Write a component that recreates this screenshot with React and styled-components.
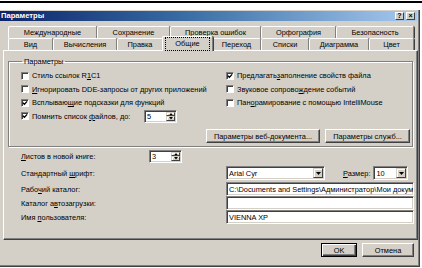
import React from "react";
import styled, { createGlobalStyle } from "styled-components";

const FACE = "#d4d0c8";
const SHADOW = "#808080";
const DARK = "#404040";
const LIGHT = "#ffffff";

const GlobalStyle = createGlobalStyle`
  html, body {
    margin: 0;
    background: #fff;
  }
  body {
    font-family: "Liberation Sans", Arial, sans-serif;
    font-size: 7.4px;
    color: #000;
  }
  u {
    text-decoration-thickness: 1px;
    text-underline-offset: 1px;
  }
`;

const Page = styled.div`
  width: 422px;
  height: 268px;
  overflow: hidden;
  padding-top: 1px;
  box-sizing: border-box;
`;

const TopRule = styled.div`
  height: 2px;
  background: #000;
  margin-bottom: 7px;
`;

const Dialog = styled.div`
  width: 420px;
  height: 257px;
  box-sizing: border-box;
  background: ${FACE};
  border-right: 1px solid ${DARK};
  border-bottom: 1px solid ${DARK};
  box-shadow: inset -1px -1px ${SHADOW};
  padding: 1px 2px 0 0;
  display: flex;
  flex-direction: column;
`;

const TitleBar = styled.div`
  height: 10px;
  display: flex;
  align-items: center;
  background: linear-gradient(to right, #0a246a, #3a6ea5 45%, #a6caf0);
  padding: 0 2px 0 1px;
`;

const Title = styled.div`
  flex: 1;
  color: #fff;
  font-weight: bold;
  font-size: 7.6px;
  line-height: 10px;
`;

const TitleButton = styled.div`
  width: 9px;
  height: 8px;
  box-sizing: border-box;
  background: ${FACE};
  border: 1px solid;
  border-color: ${LIGHT} ${DARK} ${DARK} ${LIGHT};
  font-size: 7px;
  font-weight: bold;
  line-height: 6px;
  text-align: center;
  margin-left: ${(p) => p.$gap || 0}px;
`;

const TabControl = styled.div`
  margin: 5px 0 0 3px;
  width: 415px;
  display: flex;
  flex-direction: column;
`;

const TabRow = styled.div`
  display: flex;
  height: 12px;
  padding-left: 5px;
`;

const Tab = styled.div`
  width: ${(p) => p.$w}px;
  box-sizing: border-box;
  border-top: 1px solid ${LIGHT};
  border-left: 1px solid ${LIGHT};
  border-right: 1px solid ${SHADOW};
  box-shadow: 1px 0 0 ${DARK};
  border-radius: 2px 2px 0 0;
  display: flex;
  align-items: center;
  justify-content: center;
  line-height: 10px;
  white-space: nowrap;
  position: relative;
  ${(p) =>
    p.$active &&
    `
    margin-top: -2px;
    height: 15px;
    z-index: 2;
    background: ${FACE};
    margin-left: -1px;
    margin-right: -1px;
    width: ${p.$w + 2}px;
  `}
`;

const Focus = styled.span`
  outline: 1px dotted #000;
  outline-offset: 1px;
  padding: 0 8px;
`;

const Panel = styled.div`
  height: 190px;
  box-sizing: border-box;
  border-top: 1px solid ${LIGHT};
  border-left: 1px solid ${LIGHT};
  border-right: 1px solid ${DARK};
  border-bottom: 1px solid ${DARK};
  box-shadow: inset -1px -1px ${SHADOW};
  padding: 0 0 0 4px;
  display: flex;
  flex-direction: column;
`;

const Group = styled.fieldset`
  margin: 6px 0 0 0;
  width: 405px;
  box-sizing: border-box;
  border: 1px solid ${SHADOW};
  box-shadow: 1px 1px 0 ${LIGHT}, inset 1px 1px 0 ${LIGHT};
  padding: 3px 0 3px 12px;
  min-width: 0;
`;

const Legend = styled.legend`
  padding: 0 2px;
  margin-left: 1px;
  line-height: 9px;
`;

const OptionGrid = styled.div`
  display: grid;
  grid-template-columns: 205px 1fr;
  grid-auto-rows: 13.5px;
`;

const Option = styled.label`
  display: flex;
  align-items: center;
  white-space: nowrap;
  grid-column: ${(p) => p.$col};
  grid-row: ${(p) => p.$row};
`;

const Box = styled.span`
  width: 8px;
  height: 8px;
  box-sizing: border-box;
  background: #fff;
  border: 1px solid;
  border-color: ${SHADOW} ${LIGHT} ${LIGHT} ${SHADOW};
  box-shadow: inset 1px 1px ${DARK};
  margin-right: 3px;
  display: flex;
  align-items: center;
  justify-content: center;
  flex: none;
`;

const Checkbox = ({ checked }) => (
  <Box>
    {checked && (
      <svg width="6" height="6" viewBox="0 0 7 7">
        <path d="M1 3.2 L2.8 5 L6 1.6" stroke="#000" strokeWidth="1.5" fill="none" />
      </svg>
    )}
  </Box>
);

const Field = styled.div`
  width: ${(p) => p.$w}px;
  height: ${(p) => p.$h || 14}px;
  box-sizing: border-box;
  background: #fff;
  border: 1px solid;
  border-color: ${SHADOW} ${LIGHT} ${LIGHT} ${SHADOW};
  box-shadow: inset 1px 1px ${DARK}, inset -1px -1px ${FACE};
  display: flex;
  align-items: center;
  margin-left: ${(p) => p.$ml || 0}px;
  flex: none;
  overflow: hidden;
`;

const FieldText = styled.span`
  flex: 1;
  padding-left: 2px;
  white-space: nowrap;
  overflow: hidden;
`;

const SpinCol = styled.div`
  width: 9px;
  align-self: stretch;
  margin: 1px 1px 1px 0;
  display: flex;
  flex-direction: column;
`;

const ArrowBtn = styled.div`
  flex: 1;
  box-sizing: border-box;
  background: ${FACE};
  border: 1px solid;
  border-color: ${FACE} ${DARK} ${DARK} ${FACE};
  box-shadow: inset 1px 1px ${LIGHT};
  display: flex;
  align-items: center;
  justify-content: center;
`;

const DropBtn = styled(ArrowBtn)`
  flex: none;
  width: 10px;
  align-self: stretch;
  margin: 1px;
`;

const Tri = ({ dir = "down", w = 5 }) => (
  <svg width={w} height={w / 2 + 0.5} viewBox="0 0 5 3">
    <path d={dir === "up" ? "M0 3 L2.5 0 L5 3 Z" : "M0 0 L5 0 L2.5 3 Z"} fill="#000" />
  </svg>
);

const Spin = ({ value, ml }) => (
  <Field $w={33} $h={13} $ml={ml}>
    <FieldText>{value}</FieldText>
    <SpinCol>
      <ArrowBtn>
        <Tri dir="up" w={4} />
      </ArrowBtn>
      <ArrowBtn>
        <Tri w={4} />
      </ArrowBtn>
    </SpinCol>
  </Field>
);

const Combo = ({ value, w, ml }) => (
  <Field $w={w} $ml={ml}>
    <FieldText>{value}</FieldText>
    <DropBtn>
      <Tri w={5} />
    </DropBtn>
  </Field>
);

const ButtonRow = styled.div`
  display: flex;
  justify-content: flex-end;
  gap: ${(p) => p.$gap}px;
  padding-right: ${(p) => p.$pr}px;
  margin-top: ${(p) => p.$mt}px;
`;

const Button = styled.div`
  width: ${(p) => p.$w}px;
  height: 14px;
  box-sizing: border-box;
  background: ${FACE};
  border: 1px solid;
  border-color: ${(p) => (p.$default ? "#000" : `${LIGHT} ${DARK} ${DARK} ${LIGHT}`)};
  box-shadow: ${(p) =>
    p.$default
      ? `inset 1px 1px ${LIGHT}, inset -1px -1px ${DARK}, inset -2px -2px ${SHADOW}`
      : `inset -1px -1px ${SHADOW}`};
  display: flex;
  align-items: center;
  justify-content: center;
  white-space: nowrap;
`;

const Settings = styled.div`
  display: flex;
  flex-direction: column;
  padding-left: 13px;
  margin-top: 2px;
`;

const SettingRow = styled.div`
  display: flex;
  align-items: center;
  height: ${(p) => p.$h || 14}px;
  margin-top: ${(p) => p.$mt || 0}px;
`;

const RowLabel = styled.span`
  width: ${(p) => p.$w}px;
  flex: none;
  white-space: nowrap;
`;

const InlineLabel = styled.span`
  margin: 0 3px 0 ${(p) => p.$ml}px;
  white-space: nowrap;
`;

const Footer = styled(ButtonRow)``;

const row1 = [
  ["Международные", 89],
  ["Сохранение", 73],
  ["Проверка ошибок", 91],
  ["Орфография", 75],
  ["Безопасность", 78],
];

const row2 = [
  ["Вид", 45],
  ["Вычисления", 64],
  ["Правка", 46],
  ["Общие", 49, true],
  ["Переход", 49],
  ["Списки", 48],
  ["Диаграмма", 60],
  ["Цвет", 45],
];

export default function App() {
  return (
    <Page>
      <GlobalStyle />
      <TopRule />
      <Dialog>
        <TitleBar>
          <Title>Параметры</Title>
          <TitleButton>?</TitleButton>
          <TitleButton $gap={2}>×</TitleButton>
        </TitleBar>

        <TabControl>
          <TabRow>
            {row1.map(([t, w]) => (
              <Tab key={t} $w={w}>
                {t}
              </Tab>
            ))}
          </TabRow>
          <TabRow>
            {row2.map(([t, w, a]) => (
              <Tab key={t} $w={w} $active={a}>
                {a ? <Focus>{t}</Focus> : t}
              </Tab>
            ))}
          </TabRow>

          <Panel>
            <Group>
              <Legend>Параметры</Legend>
              <OptionGrid>
                <Option $col={1} $row={1}>
                  <Checkbox />
                  Стиль ссылок R<u>1</u>C1
                </Option>
                <Option $col={1} $row={2}>
                  <Checkbox />
                  <u>И</u>гнорировать DDE-запросы от других приложений
                </Option>
                <Option $col={1} $row={3}>
                  <Checkbox checked />
                  Всплываю<u>щ</u>ие подсказки для функций
                </Option>
                <Option $col={1} $row={4}>
                  <Checkbox checked />
                  <RowLabel $w={112}>
                    Помнить список <u>ф</u>айлов, до:
                  </RowLabel>
                  <Spin value="5" />
                </Option>
                <Option $col={2} $row={1}>
                  <Checkbox checked />
                  Предлагать <u>з</u>аполнение свойств файла
                </Option>
                <Option $col={2} $row={2}>
                  <Checkbox />
                  Звуковое сопрово<u>ж</u>дение событий
                </Option>
                <Option $col={2} $row={3}>
                  <Checkbox />
                  Пан<u>о</u>рамирование с помощью IntelliMouse
                </Option>
              </OptionGrid>
              <ButtonRow $gap={5} $pr={2} $mt={6}>
                <Button $w={114}>Параметры веб-документа...</Button>
                <Button $w={85}>Параметры служб...</Button>
              </ButtonRow>
            </Group>

            <Settings>
              <SettingRow>
                <RowLabel $w={128}>
                  <u>Л</u>истов в новой книге:
                </RowLabel>
                <Spin value="3" />
              </SettingRow>
              <SettingRow $mt={3}>
                <RowLabel $w={205}>
                  Стандартный <u>ш</u>рифт:
                </RowLabel>
                <Combo value="Arial Cyr" w={99} />
                <InlineLabel $ml={18}>
                  <u>Р</u>азмер:
                </InlineLabel>
                <Combo value="10" w={35} />
              </SettingRow>
              <SettingRow $mt={2}>
                <RowLabel $w={205}>
                  Рабо<u>ч</u>ий каталог:
                </RowLabel>
                <Field $w={188}>
                  <FieldText>C:\Documents and Settings\Администратор\Мои докум</FieldText>
                </Field>
              </SettingRow>
              <SettingRow>
                <RowLabel $w={205}>
                  Каталог а<u>в</u>тозагрузки:
                </RowLabel>
                <Field $w={188}>
                  <FieldText />
                </Field>
              </SettingRow>
              <SettingRow>
                <RowLabel $w={205}>
                  Имя <u>п</u>ользователя:
                </RowLabel>
                <Field $w={188}>
                  <FieldText>VIENNA XP</FieldText>
                </Field>
              </SettingRow>
            </Settings>
          </Panel>
        </TabControl>

        <Footer $gap={5} $pr={3} $mt={3}>
          <Button $w={36} $default>
            OK
          </Button>
          <Button $w={52}>Отмена</Button>
        </Footer>
      </Dialog>
    </Page>
  );
}
